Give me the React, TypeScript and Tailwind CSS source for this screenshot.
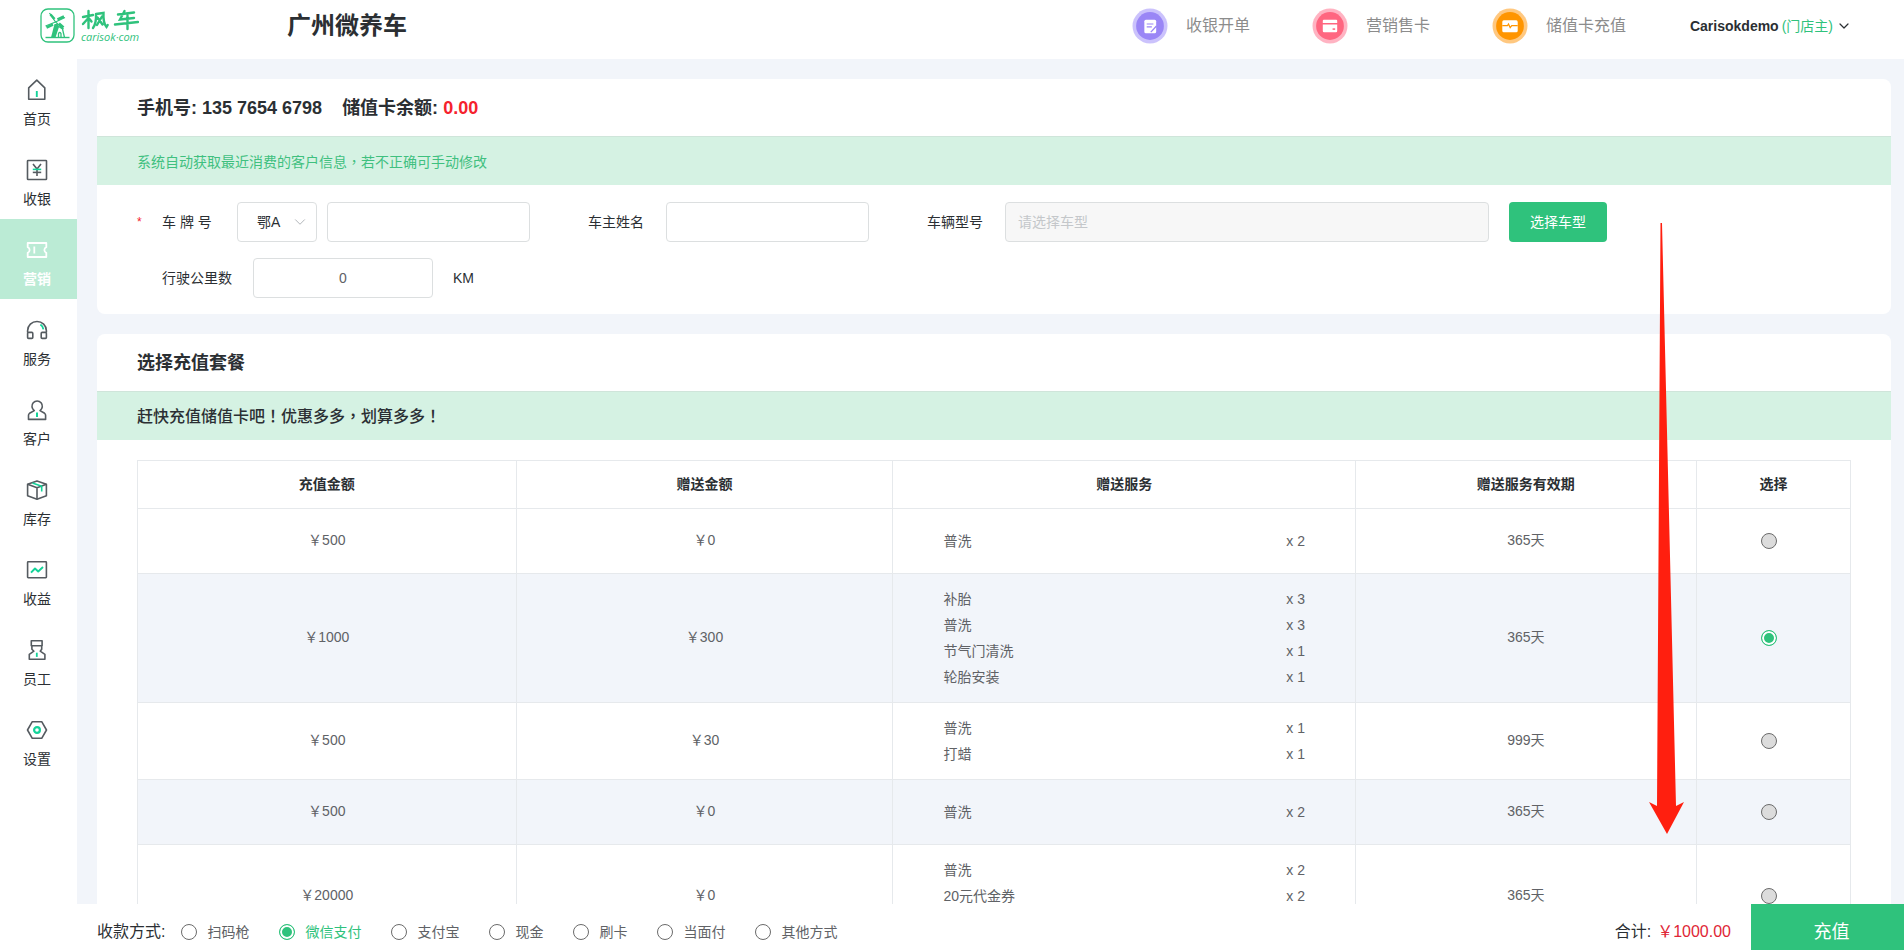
import React from "react";
import { ChevronDown } from "lucide-react";

const INK = "#555b60";
const MINT = "#14d39a";

type IconProps = { children: React.ReactNode };

function NavIcon({ children }: IconProps) {
  return (
    <svg
      width="22"
      height="22"
      viewBox="0 0 22 22"
      fill="none"
      stroke={INK}
      strokeWidth="1.6"
      strokeLinejoin="round"
      aria-hidden="true"
    >
      {children}
    </svg>
  );
}

const navItems = [
  {
    label: "首页",
    icon: (
      <NavIcon>
        <path d="M2.7 8.8 10.8 1.2l8 7.6v11.5H2.7z" />
        <path d="M10.8 12v6" stroke={MINT} strokeWidth="1.9" />
      </NavIcon>
    ),
  },
  {
    label: "收银",
    icon: (
      <NavIcon>
        <rect x="1.5" y="1.500" width="19" height="19" rx=".6" />
        <path d="m7 5 4 5 4-5M11 10v7" />
        <path d="M6.800 10.400h8.400" stroke={MINT} />
        <path d="M6.800 13.400h8.400" />
      </NavIcon>
    ),
  },
  {
    label: "营销",
    active: true,
    icon: (
      <NavIcon>
        <g stroke="#fff" strokeWidth="1.800">
          <path d="M1.700 4h18.600v4.200a3 3 0 0 0 0 5.600V18H1.700v-4.200a3 3 0 0 0 0-5.600z" />
          <path d="M8.300 7.500v7" />
        </g>
      </NavIcon>
    ),
  },
  {
    label: "服务",
    icon: (
      <NavIcon>
        <path d="M1.600 13.500v-1.800a9.400 9.200 0 0 1 18.800 0v1.800" />
        <rect x="1.600" y="13.400" width="5.200" height="6" rx="1" />
        <rect x="15.200" y="13.400" width="5.200" height="6" rx="1" />
        <path d="M14.400 5.600a7 7 0 0 1 3 4.800" stroke={MINT} strokeWidth="1.800" />
      </NavIcon>
    ),
  },
  {
    label: "客户",
    icon: (
      <NavIcon>
        <path d="M8.300 11.600A5.200 5.200 0 1 1 14 11.600l4.600 2.700q1 .7 1 2V20.400H2.500v-4.100q0-1.300 1-2z" />
        <path d="M11 13.500v4.500" stroke={MINT} strokeWidth="2" />
      </NavIcon>
    ),
  },
  {
    label: "库存",
    icon: (
      <NavIcon>
        <path d="m11 1.900 9.400 3.300v11.500L11 20.200l-9.400-3.500V5.200z" />
        <path d="M1.600 5.200 11 8.700l9.400-3.500M11 8.700v11.500" />
        <path d="m6.500 4 9.200 3.200v5.400" stroke={MINT} />
      </NavIcon>
    ),
  },
  {
    label: "收益",
    icon: (
      <NavIcon>
        <rect x="1.600" y="2.800" width="18.800" height="15.900" rx=".6" />
        <path d="m5 13.700 4-4.200 3.200 3L17 8" stroke={MINT} strokeWidth="1.900" />
      </NavIcon>
    ),
  },
  {
    label: "员工",
    icon: (
      <NavIcon>
        <path d="M5.300 1.800h10.800v4.900H5.300zM5.900 6.700v3.500l2 2-4.600 3.100v4.900h15.600v-4.900l-4.700-3.100 1.500-2V6.700" />
        <path d="M10.800 13.700v4.200" stroke={MINT} strokeWidth="1.800" />
      </NavIcon>
    ),
  },
  {
    label: "设置",
    icon: (
      <NavIcon>
        <path d="M6.300 2.700h9.400l4.800 8.300-4.800 8.300H6.300L1.500 11z" />
        <circle cx="11" cy="11" r="2.900" stroke={MINT} strokeWidth="2.200" />
      </NavIcon>
    ),
  },
];

const shortcuts = [
  {
    label: "收银开单",
    halo: "#cbc2fc",
    disc: "#9a86f6",
    art: (
      <>
        <rect x="12" y="11.500" width="11.500" height="13" rx="1.500" fill="#fff" />
        <path d="M14.300 15.500h6.500M14.300 18.300h5" stroke="#9a86f6" strokeWidth="1.100" />
        <path d="m18.300 23.500 5.500-6" stroke="#9a86f6" strokeWidth="1.300" />
      </>
    ),
  },
  {
    label: "营销售卡",
    halo: "#ffb3c2",
    disc: "#ff6680",
    art: (
      <>
        <path d="M11.500 11.500h12a1 1 0 0 1 1 1v2h-14v-2a1 1 0 0 1 1-1zM10.500 16h14v6.300a1.200 1.200 0 0 1-1.200 1.200H11.700a1.200 1.200 0 0 1-1.200-1.200z" fill="#fff" />
        <path d="M20 20.500h2.500" stroke="#ff6680" strokeWidth="1.500" />
      </>
    ),
  },
  {
    label: "储值卡充值",
    halo: "#ffc880",
    disc: "#ff9500",
    art: (
      <>
        <rect x="10" y="12" width="15" height="11.500" rx="1.500" fill="#fff" />
        <path d="M10 17.200h5l1-1.700 1.700 3.500 1.500-1.800H25" stroke="#ff9500" strokeWidth="1.200" fill="none" />
      </>
    ),
  },
];

type Service = [string, number];
type Plan = { amount: string; gift: string; services: Service[]; days: string; cell: string; row: string };

const plans: Plan[] = [
  { amount: "500", gift: "0", services: [["普洗", 2]], days: "365天", cell: "", row: "h-[65px]" },
  {
    amount: "1000",
    gift: "300",
    services: [["补胎", 3], ["普洗", 3], ["节气门清洗", 1], ["轮胎安装", 1]],
    days: "365天",
    cell: "",
    row: "h-[129px] bg-[#f2f5fa]",
  },
  { amount: "500", gift: "30", services: [["普洗", 1], ["打蜡", 1]], days: "999天", cell: "", row: "h-[77px]" },
  { amount: "500", gift: "0", services: [["普洗", 2]], days: "365天", cell: "", row: "h-[65px] bg-[#f2f5fa]" },
  {
    amount: "20000",
    gift: "0",
    services: [["普洗", 2], ["20元代金券", 2]],
    days: "365天",
    cell: "align-top pt-3",
    row: "h-[103px]",
  },
];

const payments = ["扫码枪", "微信支付", "支付宝", "现金", "刷卡", "当面付", "其他方式"];

const field = "h-10 rounded border border-[#dcdfe0] bg-white px-3 text-sm outline-none";
const line = "border border-[#e6e9ec]";

/** Full-width punctuation centred in its em box. */
function Mark({ children }: { children: string }) {
  return <span className="font-['Noto_Sans_CJK_TC',sans-serif]">{children}</span>;
}

function Logo() {
  return (
    <a href="#home" className="flex items-center gap-1.5 text-[#2fc27c]" aria-label="枫车">
      <svg width="35" height="35" viewBox="0 0 35 35" fill="none" stroke="currentColor" aria-hidden="true">
        <rect x="1" y="1" width="33" height="33" rx="7" strokeWidth="1.300" />
        <path d="M5.500 29.500h24" strokeWidth="1.400" />
        <path d="M11 29.500 14.500 16h3.200l1.300 3-3.500 10.500z" fill="currentColor" stroke="none" />
        <path d="m18 18 4.500 3 2 8.500M18.500 29.500v-4q1.200-2 2.500 0v4" strokeWidth="1.300" />
        <path d="M15.500 14 9.500 5M15.500 14 25 9.500M15.500 14 5.500 18M15.500 14l8 7" strokeWidth="1.300" />
        <path d="m14.500 11-4-4.500M17.500 11.500 24 8.500M13 16.500l-6.500 3M19 15.500l4.500 4" strokeWidth="2.600" />
      </svg>
      <span className="flex flex-col">
        <svg width="58" height="22" viewBox="0 0 58 22" fill="none" stroke="currentColor" strokeWidth="2.400" strokeLinecap="round" aria-hidden="true">
          <path d="M2 8 12 6M7.500 2v17M7 9.500 2 15M8.500 10l2 2.500" />
          <path d="M15 5q.5 9-3 14M15 5l7.500-1q-.5 10 3 14l1.200-2M21 7.500l-5 8.500M16.500 8.500l5 7" />
          <path d="M37 5.500 53 3.500M43.500 2 39 10.500l14-1.500M34 15.500l23-2.500M46.500 6.500V20" />
        </svg>
        <span className="font-['Open_Sans',sans-serif] text-[11px] leading-3 font-medium italic">carisok·com</span>
      </span>
    </a>
  );
}

export default function App() {
  return (
    <div className="relative flex h-screen flex-col overflow-hidden bg-[#f2f5fa] font-['Liberation_Sans','Noto_Sans_CJK_SC',sans-serif] text-sm text-[#2b2f33]">
      <header className="flex h-[59px] shrink-0 items-start bg-white pt-2">
        <div className="w-[287px] shrink-0 pl-10">
          <Logo />
        </div>
        <h1 className="text-2xl leading-9 font-bold">广州微养车</h1>
        <nav className="ml-auto flex items-center gap-[62px]" aria-label="快捷入口">
          {shortcuts.map((s) => (
            <a key={s.label} href="#shortcut" className="flex items-center gap-[18px] text-base text-[#8c8c8c]">
              <svg width="36" height="36" viewBox="0 0 35 35" aria-hidden="true">
                <circle cx="17.500" cy="17.500" r="17" fill={s.halo} />
                <circle cx="17.500" cy="17.500" r="13.500" fill={s.disc} />
                {s.art}
              </svg>
              {s.label}
            </a>
          ))}
        </nav>
        <button className="mr-[52px] ml-16 flex h-9 items-center gap-[3px] text-sm">
          <strong>Carisokdemo</strong>
          <span className="text-[#2fc27c]">(门店主)</span>
          <ChevronDown size={16} strokeWidth={1.8} />
        </button>
      </header>

      <div className="flex min-h-0 flex-1">
        <nav className="w-[77px] shrink-0 bg-white" aria-label="主菜单">
          {navItems.map((n) => (
            <a
              key={n.label}
              href="#menu"
              className={
                n.active
                  ? "flex h-20 flex-col items-center gap-2 bg-[#bbebd5] pt-5 pr-[3px] leading-5 font-bold text-white"
                  : "flex h-20 flex-col items-center gap-2 pt-5 pr-[3px] leading-5"
              }
            >
              {n.icon}
              {n.label}
            </a>
          ))}
        </nav>

        <main className="min-w-0 flex-1 overflow-hidden pt-5 pr-[13px] pl-5">
          <section className="rounded-lg bg-white pb-4">
            <h2 className="flex h-[57px] items-center gap-5 px-10 text-lg font-bold">
              <span>手机号: 135 7654 6798</span>
              <span>
                储值卡余额: <span className="text-[#f5222d]">0.00</span>
              </span>
            </h2>
            <p className="flex h-[49px] items-center border-t border-[#cfe5da] bg-[#d5f2e3] px-10 text-[#3fc07f]">
              <span>
                系统自动获取最近消费的客户信息<Mark>，</Mark>若不正确可手动修改
              </span>
            </p>
            <form className="pt-[17px] pl-10">
              <div className="flex items-center">
                <span className="w-[25px] text-xs text-[#f5222d]">*</span>
                <label htmlFor="plate" className="w-[75px]">
                  车 牌 号
                </label>
                <span className="relative mr-2.5">
                  <select aria-label="地区" className="h-10 w-20 appearance-none rounded border border-[#dcdfe0] bg-white pl-[19px] text-sm">
                    <option>鄂A</option>
                  </select>
                  <ChevronDown size={18} strokeWidth={1.300} className="pointer-events-none absolute top-[11px] right-2 text-[#b0b4b8]" />
                </span>
                <input id="plate" className={`${field} w-[203px]`} />
                <label htmlFor="owner" className="mr-[22px] ml-[58px]">
                  车主姓名
                </label>
                <input id="owner" className={`${field} w-[203px]`} />
                <label htmlFor="model" className="mr-[22px] ml-[58px]">
                  车辆型号
                </label>
                <input
                  id="model"
                  disabled
                  placeholder="请选择车型"
                  className="h-10 w-[484px] rounded border border-[#dcdfe0] bg-[#f7f7f7] px-3 text-sm placeholder:text-[#c4c7ca]"
                />
                <button type="button" className="ml-5 h-10 w-[98px] rounded bg-[#2fc27c] text-white">
                  选择车型
                </button>
              </div>
              <div className="mt-4 flex items-center pl-[25px]">
                <label htmlFor="mileage" className="mr-[21px]">
                  行驶公里数
                </label>
                <input id="mileage" defaultValue="0" className={`${field} w-[180px] text-center text-[#606266]`} />
                <span className="ml-5">KM</span>
              </div>
            </form>
          </section>

          <section className="mt-5 rounded-lg bg-white pb-10">
            <h2 className="flex h-[57px] items-center px-10 text-lg font-bold">选择充值套餐</h2>
            <p className="flex h-[49px] items-center border-t border-[#cfe5da] bg-[#d5f2e3] px-10 text-base font-medium">
              <span>
                赶快充值储值卡吧<Mark>！</Mark>优惠多多<Mark>，</Mark>划算多多<Mark>！</Mark>
              </span>
            </p>
            <div className="px-10 pt-5">
              <table className="w-full table-fixed border-collapse text-center text-[#606266]">
                <colgroup>
                  <col className="w-[22.1%]" />
                  <col className="w-[22%]" />
                  <col className="w-[27%]" />
                  <col className="w-[19.9%]" />
                  <col className="w-[9%]" />
                </colgroup>
                <thead>
                  <tr className="h-12 text-[#2b2f33]">
                    {["充值金额", "赠送金额", "赠送服务", "赠送服务有效期", "选择"].map((h) => (
                      <th key={h} className={`${line} pb-0.5`}>
                        {h}
                      </th>
                    ))}
                  </tr>
                </thead>
                <tbody>
                  {plans.map((p, i) => (
                    <tr key={i} className={p.row}>
                      <td className={`${line} pb-0.5`}>￥{p.amount}</td>
                      <td className={`${line} pb-0.5`}>￥{p.gift}</td>
                      <td className={`${line} px-[50px] ${p.cell}`}>
                        <ul>
                          {p.services.map(([name, n]) => (
                            <li key={name} className="flex justify-between leading-[26px]">
                              <span>{name}</span>
                              <span>x {n}</span>
                            </li>
                          ))}
                        </ul>
                      </td>
                      <td className={`${line} pb-0.5`}>{p.days}</td>
                      <td className={`${line} pr-2`}>
                        <input
                          type="radio"
                          name="plan"
                          aria-label={`充值${p.amount}`}
                          defaultChecked={i === 1}
                          className="mx-auto block size-4 appearance-none rounded-full border border-[#6b6b6b] bg-[#dcdcdc] checked:border-[#2fc27c] checked:bg-[#2fc27c] checked:shadow-[inset_0_0_0_2px_white]"
                        />
                      </td>
                    </tr>
                  ))}
                </tbody>
              </table>
            </div>
          </section>
        </main>
      </div>

      <footer className="flex h-[46px] shrink-0 items-stretch bg-white pl-[97px]">
        <div role="radiogroup" aria-labelledby="pay-title" className="flex items-center pt-[9px]">
          <span id="pay-title" className="mr-4 text-base">
            收款方式:
          </span>
          {payments.map((p, i) => (
            <label key={p} className="mr-[30px] flex items-center gap-2.5 text-[#606266] has-checked:text-[#2fc27c]">
              <input
                type="radio"
                name="payment"
                defaultChecked={i === 1}
                className="size-4 appearance-none rounded-full border border-[#6b6b6b] bg-white checked:border-[#2fc27c] checked:bg-[#2fc27c] checked:shadow-[inset_0_0_0_2px_white]"
              />
              {p}
            </label>
          ))}
        </div>
        <p className="mr-5 ml-auto flex items-center gap-1.5 pt-[9px] text-base">
          合计: <span className="text-[#e02636]">￥1000.00</span>
        </p>
        <button className="w-[153px] bg-[#2fc27c] pt-[9px] pl-2 text-lg text-white">充值</button>
      </footer>

      <svg
        width="36"
        height="612"
        viewBox="0 0 36 612"
        className="pointer-events-none absolute top-[222px] right-[219px]"
        aria-hidden="true"
      >
        <path d="M11.500 1h1.500L27 584l8-4-17 32L0 580l8 4z" fill="#ff1f0f" />
      </svg>
    </div>
  );
}
